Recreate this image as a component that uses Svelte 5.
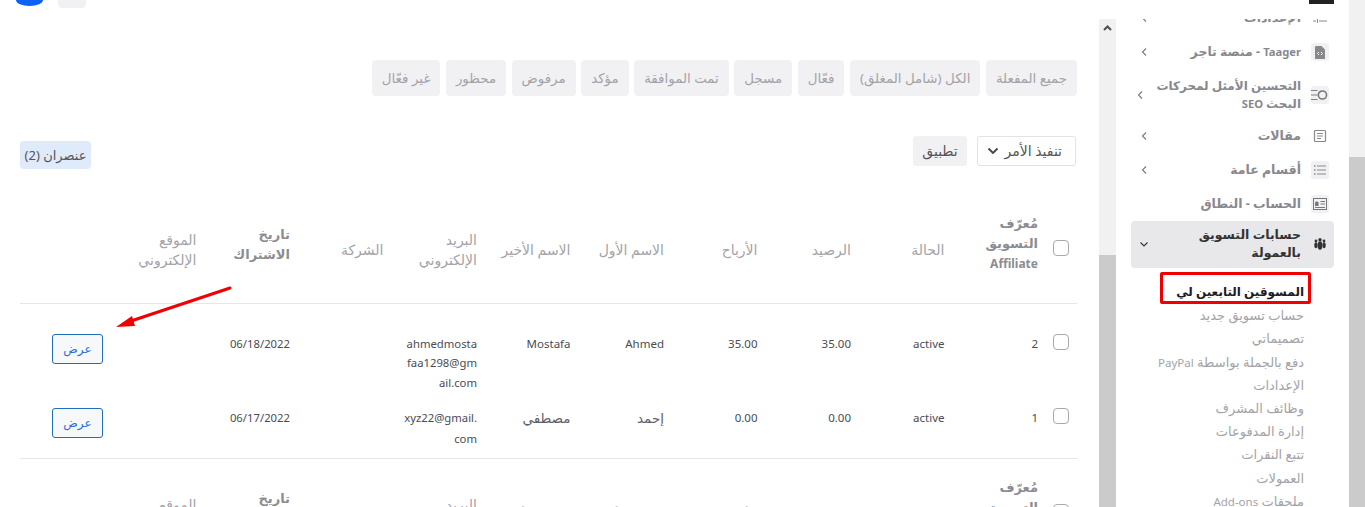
<script>
	const filters = ["جميع المفعلة", "الكل (شامل المغلق)", "فعّال", "مسجل", "تمت الموافقة", "مؤكد", "مرفوض", "محظور", "غير فعّال"];

	const rows = [
		{ id: 2, status: "active", balance: "35.00", profit: "35.00", first: "Ahmed", last: "Mostafa", email: ["ahmedmosta", "faa1298@gm", "ail.com"], date: "06/18/2022", ar: false },
		{ id: 1, status: "active", balance: "0.00", profit: "0.00", first: "إحمد", last: "مصطفي", email: ["xyz22@gmail.", "com"], date: "06/17/2022", ar: true }
	];

	const subMenu = [
		["حساب تسويق جديد"],
		["تصميماتي"],
		["دفع بالجملة بواسطة", "PayPal"],
		["الإعدادات"],
		["وظائف المشرف"],
		["إدارة المدفوعات"],
		["تتبع النقرات"],
		["العمولات"],
		["ملحقات", "Add-ons"]
	];
</script>

{#snippet headCells()}
	<th class="check"><span class="box"></span></th>
	<th class="strong">مُعرّف التسويق <span class="en">Affiliate</span></th>
	<th>الحالة</th>
	<th>الرصيد</th>
	<th>الأرباح</th>
	<th>الاسم الأول</th>
	<th>الاسم الأخير</th>
	<th>البريد الإلكتروني</th>
	<th>الشركة</th>
	<th class="strong">تاريخ الاشتراك</th>
	<th>الموقع الإلكتروني</th>
	<th></th>
{/snippet}

{#snippet chevron()}
	<svg class="chev" width="8" height="10" viewBox="0 0 8 10"><path d="M6 1.500 2.500 5 6 8.500" fill="none" stroke="#777" stroke-width="1.100"/></svg>
{/snippet}

<div class="page">
	<main>
		<div class="stubs">
			<span class="stub-grey"></span>
			<span class="stub-blue"></span>
		</div>

		<div class="filters">
			{#each filters as f}
				<span class="filter">{f}</span>
			{/each}
		</div>

		<div class="toolbar">
			<div class="actions">
				<span class="select">تنفيذ الأمر
					<svg width="12" height="8" viewBox="0 0 12 8"><path d="M1.500 1.500 6 6l4.500-4.500" fill="none" stroke="#444" stroke-width="1.800"/></svg>
				</span>
				<span class="apply">تطبيق</span>
			</div>
			<span class="count">عنصران (2)</span>
		</div>

		<table>
			<colgroup>
				<col style="width:31px" />
				{#each Array(10) as _}<col style="width:93.500px" />{/each}
				<col />
			</colgroup>
			<thead>
				<tr>{@render headCells()}</tr>
			</thead>
			<tbody>
				{#each rows as r}
					<tr>
						<td class="check"><span class="box"></span></td>
						<td>{r.id}</td>
						<td>{r.status}</td>
						<td>{r.balance}</td>
						<td>{r.profit}</td>
						<td class:ar={r.ar}>{r.first}</td>
						<td class:ar={r.ar}>{r.last}</td>
						<td class="email">{#each r.email as part}<div>{part}</div>{/each}</td>
						<td></td>
						<td class="date">{r.date}</td>
						<td></td>
						<td class="view"><span class="btn">عرض</span></td>
					</tr>
				{/each}
			</tbody>
			<tfoot>
				<tr>{@render headCells()}</tr>
			</tfoot>
		</table>

		<svg class="arrow" width="130" height="50" viewBox="0 0 130 50">
			<path d="M124 2 22 36" stroke="#f00000" stroke-width="3" stroke-linecap="round" />
			<path d="M10 41 26 30 29 40z" fill="#f00000" />
		</svg>
	</main>

	<div class="bar inner">
		<svg class="arrow-up" width="9" height="6" viewBox="0 0 9 6"><path d="M1 5 4.500 1.500 8 5" fill="none" stroke="#505050" stroke-width="2"/></svg>
		<span class="thumb"></span>
	</div>

	<aside>
		<span class="logo-stub"></span>
		<nav>
			<div class="scrolled">
				<a class="item">
					<span class="ico">
						<svg width="14" height="18" viewBox="0 0 14 18"><path d="M0 6h6M9 6h5M0 12h3M6 12h8M7.500 4v4M4.500 10v4" stroke="#888" fill="none"/></svg>
					</span>
					<span class="label">الإعدادات</span>
					{@render chevron()}
				</a>
				<a class="item">
					<span class="ico bg">
						<svg width="10" height="13" viewBox="0 0 10 13"><path d="M1 0h5.500L10 3.500V13H0V1a1 1 0 0 1 1-1z" fill="#888"/><path d="M4 6 2.500 7.500 4 9M6 6l1.500 1.500L6 9" stroke="#fff" fill="none" stroke-width=".9"/></svg>
					</span>
					<span class="label"><span class="en">Taager</span> - منصة تاجر</span>
					{@render chevron()}
				</a>
				<a class="item seo">
					<span class="ico bg">
						<svg width="22" height="14" viewBox="0 0 22 14"><path d="M0 1.500h8M0 7h8M0 12.500h8" stroke="#777" stroke-width="1.100" fill="none"/><circle cx="14" cy="7" r="5" fill="none" stroke="#777" stroke-width="1.900"/></svg>
					</span>
					<span class="label">التحسين الأمثل لمحركات البحث <span class="en">SEO</span></span>
					{@render chevron()}
				</a>
				<a class="item">
					<span class="ico">
						<svg width="14" height="14" viewBox="0 0 14 14"><rect x="1.500" y="1.500" width="11" height="11" rx="1" fill="none" stroke="#888" stroke-width="1.200"/><path d="M4 4.500h6M4 7h6M4 9.500h4" stroke="#888"/></svg>
					</span>
					<span class="label">مقالات</span>
					{@render chevron()}
				</a>
				<a class="item">
					<span class="ico bg">
						<svg width="12" height="12" viewBox="0 0 12 12"><path d="M3 2h9M3 6h9M3 10h9" stroke="#888"/><path d="M0 2h1.500M0 6h1.500M0 10h1.500" stroke="#888" stroke-width="1.400"/></svg>
					</span>
					<span class="label">أقسام عامة</span>
					{@render chevron()}
				</a>
				<a class="item">
					<span class="ico bg">
						<svg width="14" height="12" viewBox="0 0 14 12"><rect x=".5" y=".5" width="13" height="11" fill="none" stroke="#777"/><path d="M2 8V4.500l1-1h1.500l1 1V8z" fill="#777"/><path d="M7.500 3.500H12M7.500 6H12M2 9.500h10" stroke="#777"/></svg>
					</span>
					<span class="label">الحساب - النطاق</span>
				</a>
				<a class="item active">
					<span class="ico">
						<svg width="12" height="12" viewBox="0 0 12 12" fill="#333"><circle cx="6" cy="1.700" r="1.700"/><circle cx="2" cy="3" r="1.400"/><circle cx="10" cy="3" r="1.400"/><ellipse cx="6" cy="7.500" rx="2.400" ry="4.200"/><ellipse cx="1.900" cy="7.200" rx="1.600" ry="3"/><ellipse cx="10.100" cy="7.200" rx="1.600" ry="3"/></svg>
					</span>
					<span class="label">حسابات التسويق بالعمولة</span>
					<svg class="chev down" width="10" height="8" viewBox="0 0 10 8"><path d="M1.500 2.500 5 6l3.500-3.500" fill="none" stroke="#333" stroke-width="1.100"/></svg>
				</a>
				<ul>
					<li class="current">المسوقين التابعين لي</li>
					{#each subMenu as [text, en]}
						<li>{text}{#if en}&nbsp;<span class="en">{en}</span>{/if}</li>
					{/each}
				</ul>
			</div>
		</nav>
	</aside>

	<div class="bar outer"><span class="thumb"></span></div>
</div>

<style>
	:global(body) {
		background: #fff;
	}
	.page {
		display: flex;
		height: 507px;
		overflow: hidden;
		font-family: "Noto Sans", "DejaVu Sans", sans-serif;
		font-size: 14px;
		line-height: 20px;
		color: #4b4b55;
	}
	main {
		position: relative;
		width: 1099px;
		flex: none;
		box-sizing: border-box;
		padding: 0 22px 0 20px;
		direction: rtl;
		overflow: hidden;
	}
	.stubs {
		position: absolute;
		top: 0;
		left: 16px;
		display: flex;
		direction: rtl;
		gap: 15px;
		align-items: flex-start;
	}
	.stub-blue {
		width: 27px;
		height: 6px;
		background: #0d62f5;
		border-radius: 0 0 50% 50% / 0 0 100% 100%;
	}
	.stub-grey {
		width: 28px;
		height: 8px;
		background: #f1f1f4;
		border-radius: 0 0 4px 4px;
	}
	.filters {
		display: flex;
		flex-wrap: wrap;
		gap: 5.500px;
		margin-top: 60px;
	}
	.filter {
		background: #f1f1f4;
		border-radius: 4px;
		color: #a3a3a8;
		font-size: 13.400px;
		padding: 0 10px;
		height: 36px;
		line-height: 36px;
		white-space: nowrap;
	}
	.toolbar {
		display: flex;
		justify-content: space-between;
		align-items: center;
		margin-top: 40px;
		height: 30px;
	}
	.actions {
		display: flex;
		gap: 10px;
		margin-right: 1px;
	}
	.select {
		display: flex;
		justify-content: space-between;
		align-items: center;
		box-sizing: border-box;
		width: 99px;
		height: 30px;
		padding: 0 13px 0 9px;
		border: 1px solid #e1e3ea;
		border-radius: 3px;
		color: #555;
		white-space: nowrap;
	}
	.apply {
		box-sizing: border-box;
		width: 54px;
		height: 30px;
		line-height: 30px;
		text-align: center;
		background: #f1f1f4;
		border-radius: 3px;
		color: #555;
	}
	.count {
		background: #dfeafb;
		color: #555;
		font-size: 13px;
		border-radius: 4px;
		width: 71px;
		height: 28px;
		line-height: 28px;
		text-align: center;
		margin-top: 8px;
		white-space: nowrap;
	}
	table {
		width: 1057px;
		border-collapse: collapse;
		table-layout: fixed;
		margin-top: 19px;
	}
	th, td {
		text-align: right;
		font-weight: 400;
	}
	th {
		box-sizing: border-box;
		color: #a3a3a8;
		vertical-align: middle;
		height: 118px;
		padding: 23px 8px 10px;
		line-height: 20px;
	}
	tfoot th {
		height: 98px;
		padding-top: 25px;
	}
	th.strong {
		padding-top: 10px;
		font-size: 13px;
		font-weight: 700;
		color: #8c8c92;
	}
	tfoot th.strong {
		padding-top: 10px;
	}
	th .en {
		font-size: 12px;
	}
	td {
		vertical-align: top;
		padding: 10px 8px 9px;
		font-size: 11.500px;
		color: #4b4b55;
	}
	td.ar {
		font-size: 13.500px;
		color: #5f5f68;
	}
	td.date {
		font-size: 11.300px;
	}
	thead tr {
		border-bottom: 1px solid #e6e6e8;
	}
	tbody tr:first-child td {
		padding-top: 30px;
		padding-bottom: 6px;
	}
	tbody tr:last-child {
		border-bottom: 1px solid #e6e6e8;
	}
	.email {
		font-size: 11.300px;
		line-height: 19.500px;
		white-space: nowrap;
	}
	.email div {
		direction: ltr;
		text-align: right;
	}
	tbody tr:last-child .email {
		line-height: 20.500px;
	}
	th.check,
	tfoot th.check {
		padding: 9px 8px 0 7px;
	}
	td.check {
		padding: 10px 8px 0 7px;
	}
	tbody tr:first-child td.check,
	tbody tr:first-child td.view {
		padding-top: 30px;
	}
	.box {
		display: block;
		box-sizing: border-box;
		width: 16px;
		height: 16px;
		border: 1px solid #a9a9b0;
		border-radius: 4px;
		background: #fff;
	}
	td.view {
		padding: 10px 8px 0 32px;
		font-size: 12px;
	}
	.btn {
		display: block;
		box-sizing: border-box;
		width: 51px;
		height: 30px;
		line-height: 28px;
		text-align: center;
		background: #f6f8f9;
		border: 1px solid #1e6fb8;
		border-radius: 3px;
		color: #2c6be0;
	}
	.arrow {
		position: absolute;
		left: 106px;
		top: 286px;
	}
	.bar {
		flex: none;
		background: #f1f1f1;
	}
	.inner {
		position: relative;
		width: 17px;
		height: 488px;
		margin-top: 19px;
	}
	.arrow-up {
		position: absolute;
		top: 6px;
		left: 4px;
	}
	.thumb {
		position: absolute;
		left: 0;
		right: 0;
		bottom: 0;
		background: #cbcbcb;
	}
	.inner .thumb {
		top: 236px;
	}
	.outer {
		position: relative;
		width: 16px;
	}
	.outer .thumb {
		top: 157px;
	}
	aside {
		position: relative;
		width: 233px;
		flex: none;
	}
	.logo-stub {
		position: absolute;
		top: 0;
		left: 193px;
		width: 25px;
		height: 4px;
		background: #222;
	}
	nav {
		height: 488px;
		margin-top: 19px;
		overflow: hidden;
		direction: rtl;
		font-size: 12.500px;
	}
	.scrolled {
		padding: 0 15px;
	}
	.item {
		display: flex;
		align-items: center;
		gap: 10px;
		padding: 8px 5px 8px 9px;
		color: #88888e;
		font-weight: 700;
		line-height: 18px;
	}
	.item:first-child {
		margin-top: -18px;
	}
	.item .en {
		font-size: 11.200px;
	}
	.seo {
		padding-left: 5px;
		margin-bottom: -2px;
		font-size: 12px;
	}
	.seo .chev {
		margin-right: -4px;
	}
	.label {
		flex: 1;
	}
	.ico {
		flex: none;
		display: flex;
		align-items: center;
		justify-content: center;
		width: 18px;
		height: 18px;
		border-radius: 3px;
	}
	.ico.bg {
		background: #f1f1f4;
	}
	.chev {
		flex: none;
	}
	.active {
		background: #e8e8ea;
		border-radius: 4px;
		color: #333;
		padding-top: 5px;
		padding-bottom: 6px;
		padding-left: 8px;
	}
	ul {
		list-style: none;
		margin: 12px 0 0;
		padding: 0 30px 0 0;
	}
	li {
		height: 23.200px;
		line-height: 23.200px;
		font-size: 13px;
		color: #a3a3a8;
		white-space: nowrap;
	}
	li .en {
		font-size: 11.500px;
	}
	.current {
		position: relative;
		font-size: 12px;
		color: #1c1c24;
		font-weight: 700;
		margin-bottom: 1px;
	}
	.current::after {
		content: "";
		position: absolute;
		top: -8px;
		right: -7px;
		width: 145px;
		height: 26px;
		border: 3px solid #f00000;
		border-radius: 2px;
	}
</style>
